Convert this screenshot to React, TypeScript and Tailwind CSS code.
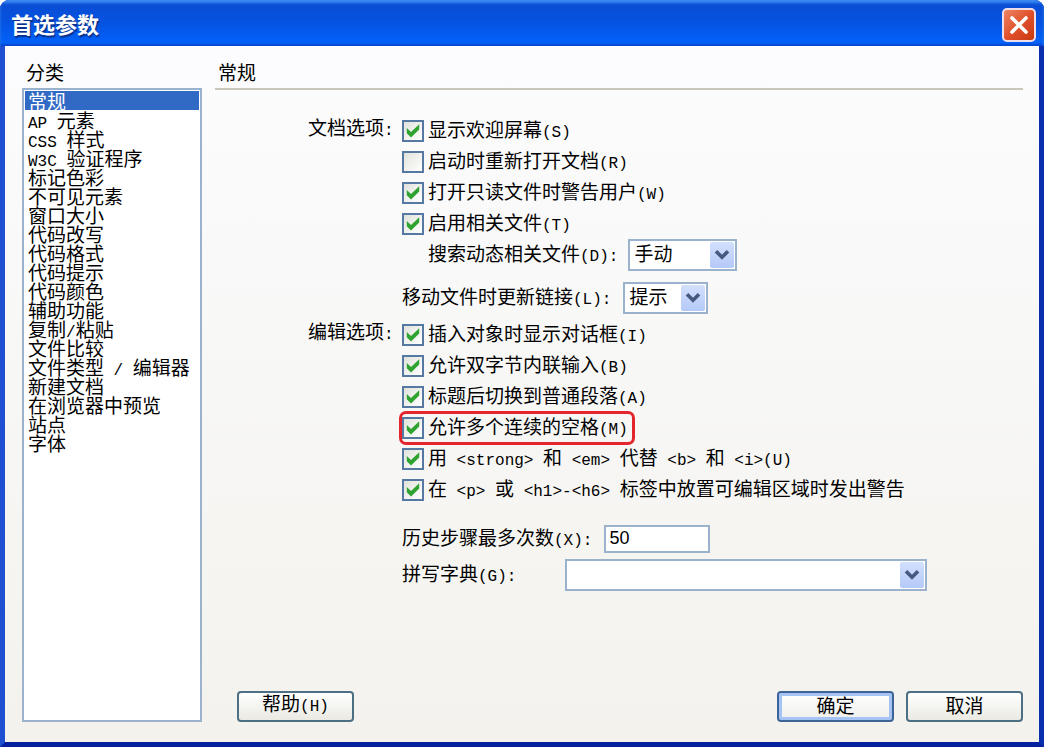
import { Fragment, useState, type ReactNode } from "react";

const CATEGORIES = [
  "常规",
  "AP 元素",
  "CSS 样式",
  "W3C 验证程序",
  "标记色彩",
  "不可见元素",
  "窗口大小",
  "代码改写",
  "代码格式",
  "代码提示",
  "代码颜色",
  "辅助功能",
  "复制/粘贴",
  "文件比较",
  "文件类型 / 编辑器",
  "新建文档",
  "在浏览器中预览",
  "站点",
  "字体",
];

/* Latin runs are set in a half-width face so two letters span one ideograph. */
function Mixed({ text }: { text: string }) {
  const runs = text.match(/[\x20-\x7e]+|[^\x20-\x7e]+/g) ?? [];
  return (
    <span className="whitespace-pre">
      {runs.map((run, i) =>
        /^[\x20-\x7e]/.test(run) ? (
          <span key={i} className="font-['Liberation_Mono',monospace] text-[16px]">
            {run}
          </span>
        ) : (
          <Fragment key={i}>{run}</Fragment>
        ),
      )}
    </span>
  );
}

function Row({ children }: { children: ReactNode }) {
  return <div className="flex h-[31px] items-center">{children}</div>;
}

function Check({ text, checked = false, marked = false }: { text: string; checked?: boolean; marked?: boolean }) {
  return (
    <Row>
      <label
        className={
          marked
            ? "flex h-7 items-center gap-1 rounded-sm pr-1 outline-3 outline-[#e3262d]"
            : "flex h-7 items-center gap-1"
        }
      >
        <span className="grid size-[22px] shrink-0">
          <input
            type="checkbox"
            defaultChecked={checked}
            className="peer col-start-1 row-start-1 size-full appearance-none border-2 border-[#5579a3] bg-linear-to-br from-[#e2e2dc] to-white"
          />
          <svg
            viewBox="0 0 22 22"
            className="pointer-events-none invisible col-start-1 row-start-1 size-full peer-checked:visible"
            aria-hidden="true"
          >
            <path d="M4.8 8 L9 12 L17.2 4.2 V9.4 L9 17.4 L4.8 13.2 Z" fill="#2fa32f" />
          </svg>
        </span>
        <Mixed text={text} />
      </label>
    </Row>
  );
}

function Dropdown({ id, options, className }: { id: string; options: string[]; className: string }) {
  return (
    <span className={`grid h-8 ${className}`}>
      <select
        id={id}
        className="col-start-1 row-start-1 h-full w-full appearance-none border-2 border-[#9bb2cc] bg-white pr-7 pb-1 pl-1 leading-6 outline-none"
      >
        {options.map((o) => (
          <option key={o}>{o}</option>
        ))}
      </select>
      <span className="pointer-events-none col-start-1 row-start-1 m-[3px] flex w-6 items-center justify-center justify-self-end rounded-xs bg-linear-to-b from-[#d3e0fd] to-[#b4c9f7]">
        <svg viewBox="0 0 16 12" className="h-3 w-4" aria-hidden="true">
          <path d="M2 2.2 L8 8.2 L14 2.2" fill="none" stroke="#45597f" strokeWidth="3.6" />
        </svg>
      </span>
    </span>
  );
}

function PushButton({ text, primary = false }: { text: string; primary?: boolean }) {
  return (
    <button
      type="button"
      className={
        primary
          ? "flex h-[31px] w-[117px] items-center justify-center rounded-[4px] border-2 border-[#3d6499] bg-linear-to-b from-white to-[#eeeeea] pb-1 inset-ring-3 inset-ring-[#a5c4f3]"
          : "flex h-[31px] w-[117px] items-center justify-center rounded-[4px] border-2 border-[#4d6f83] bg-linear-to-b from-white to-[#eae9e2] pb-1"
      }
    >
      <Mixed text={text} />
    </button>
  );
}

export default function App() {
  const [active, setActive] = useState(CATEGORIES[0]);

  return (
    <div className="min-h-screen bg-white font-['Noto_Sans_CJK_SC',sans-serif] text-[19px] leading-[19px] text-black">
      <div className="flex min-h-screen flex-col overflow-hidden rounded-t-[9px] bg-[#1746c8]">
        <header className="flex h-[46px] items-center justify-between bg-linear-to-b from-[#0a4bd0] via-[#0553e2] to-[#0264fd] pt-1 pr-2 pl-[11px] shadow-[inset_0_3px_3px_#3c8bf5,inset_0_-2px_2px_#0347cf]">
          <h1 className="pb-1 text-[22px] leading-6 font-bold text-white [text-shadow:1px_2px_1px_#0a2f87]">首选参数</h1>
          <button
            type="button"
            aria-label="关闭"
            className="flex size-[34px] items-center justify-center rounded-[5px] border-2 border-[#f0ddea] bg-linear-to-br from-[#ee8462] via-[#e0512b] to-[#c8380f]"
          >
            <svg viewBox="0 0 24 24" className="size-6" aria-hidden="true">
              <path d="M5 5 L19 19 M19 5 L5 19" stroke="#fff" strokeWidth="3.6" strokeLinecap="round" />
            </svg>
          </button>
        </header>

        <main className="flex grow border-r-[5px] border-b-[5px] border-l-[5px] border-t-0 border-r-[#0a2fae] border-b-[#0620a0] border-l-[#1f50d2] bg-linear-to-b from-[#fcfcfe] to-[#f3f2ed] pt-4 pr-4 pb-5 pl-[17px]">
          <nav className="flex w-[180px] shrink-0 flex-col" aria-labelledby="categories">
            <h2 id="categories" className="h-[26px] pl-1 leading-5">
              分类
            </h2>
            <ul className="grow border-2 border-[#9bb2cc] bg-white p-px">
              {CATEGORIES.map((name) => (
                <li key={name}>
                  <button
                    type="button"
                    onClick={() => setActive(name)}
                    className={
                      name === active
                        ? "block h-[19px] w-full bg-[#316ac5] pl-[3px] text-left text-white"
                        : "block h-[19px] w-full pl-[3px] text-left"
                    }
                  >
                    <Mixed text={name} />
                  </button>
                </li>
              ))}
            </ul>
          </nav>

          <section className="ml-[13px] flex grow flex-col">
            <h2 className="h-[28px] border-b-2 border-[#c9c8b8] pl-[3px] leading-5">常规</h2>

            <div className="mt-[25px] ml-[93px] grid grid-cols-[94px_auto] gap-y-1.5">
              <h3 className="pt-[2px]">
                <Mixed text="文档选项:" />
              </h3>
              <div>
                <Check text="显示欢迎屏幕(S)" checked />
                <Check text="启动时重新打开文档(R)" />
                <Check text="打开只读文件时警告用户(W)" checked />
                <Check text="启用相关文件(T)" checked />
                <div className="flex h-[31px] items-center gap-2.5 pl-[26px]">
                  <label htmlFor="search">
                    <Mixed text="搜索动态相关文件(D):" />
                  </label>
                  <Dropdown id="search" options={["手动", "自动", "禁用"]} className="w-[109px]" />
                </div>
                <div className="mt-3 flex h-[31px] items-center gap-3">
                  <label htmlFor="links">
                    <Mixed text="移动文件时更新链接(L):" />
                  </label>
                  <Dropdown id="links" options={["提示", "总是", "从不"]} className="w-[85px]" />
                </div>
              </div>

              <h3 className="pt-[2px]">
                <Mixed text="编辑选项:" />
              </h3>
              <div>
                <Check text="插入对象时显示对话框(I)" checked />
                <Check text="允许双字节内联输入(B)" checked />
                <Check text="标题后切换到普通段落(A)" checked />
                <Check text="允许多个连续的空格(M)" checked marked />
                <Check text="用 <strong> 和 <em> 代替 <b> 和 <i>(U)" checked />
                <Check text="在 <p> 或 <h1>-<h6> 标签中放置可编辑区域时发出警告" checked />
                <div className="mt-[18px] flex h-[31px] items-center gap-3">
                  <label htmlFor="history">
                    <Mixed text="历史步骤最多次数(X):" />
                  </label>
                  <input
                    id="history"
                    type="text"
                    defaultValue="50"
                    className="h-7 w-[106px] border-2 border-[#9bb2cc] bg-white px-[3px] font-['Liberation_Sans',sans-serif] text-[18px]"
                  />
                </div>
                <div className="mt-[5px] flex h-[31px] items-center">
                  <label htmlFor="dictionary" className="w-[163px]">
                    <Mixed text="拼写字典(G):" />
                  </label>
                  <Dropdown id="dictionary" options={[""]} className="w-[362px]" />
                </div>
              </div>
            </div>

            <footer className="mt-auto flex gap-3 pt-4 pl-[22px]">
              <PushButton text="帮助(H)" />
              <span className="grow" />
              <PushButton text="确定" primary />
              <PushButton text="取消" />
            </footer>
          </section>
        </main>
      </div>
    </div>
  );
}
